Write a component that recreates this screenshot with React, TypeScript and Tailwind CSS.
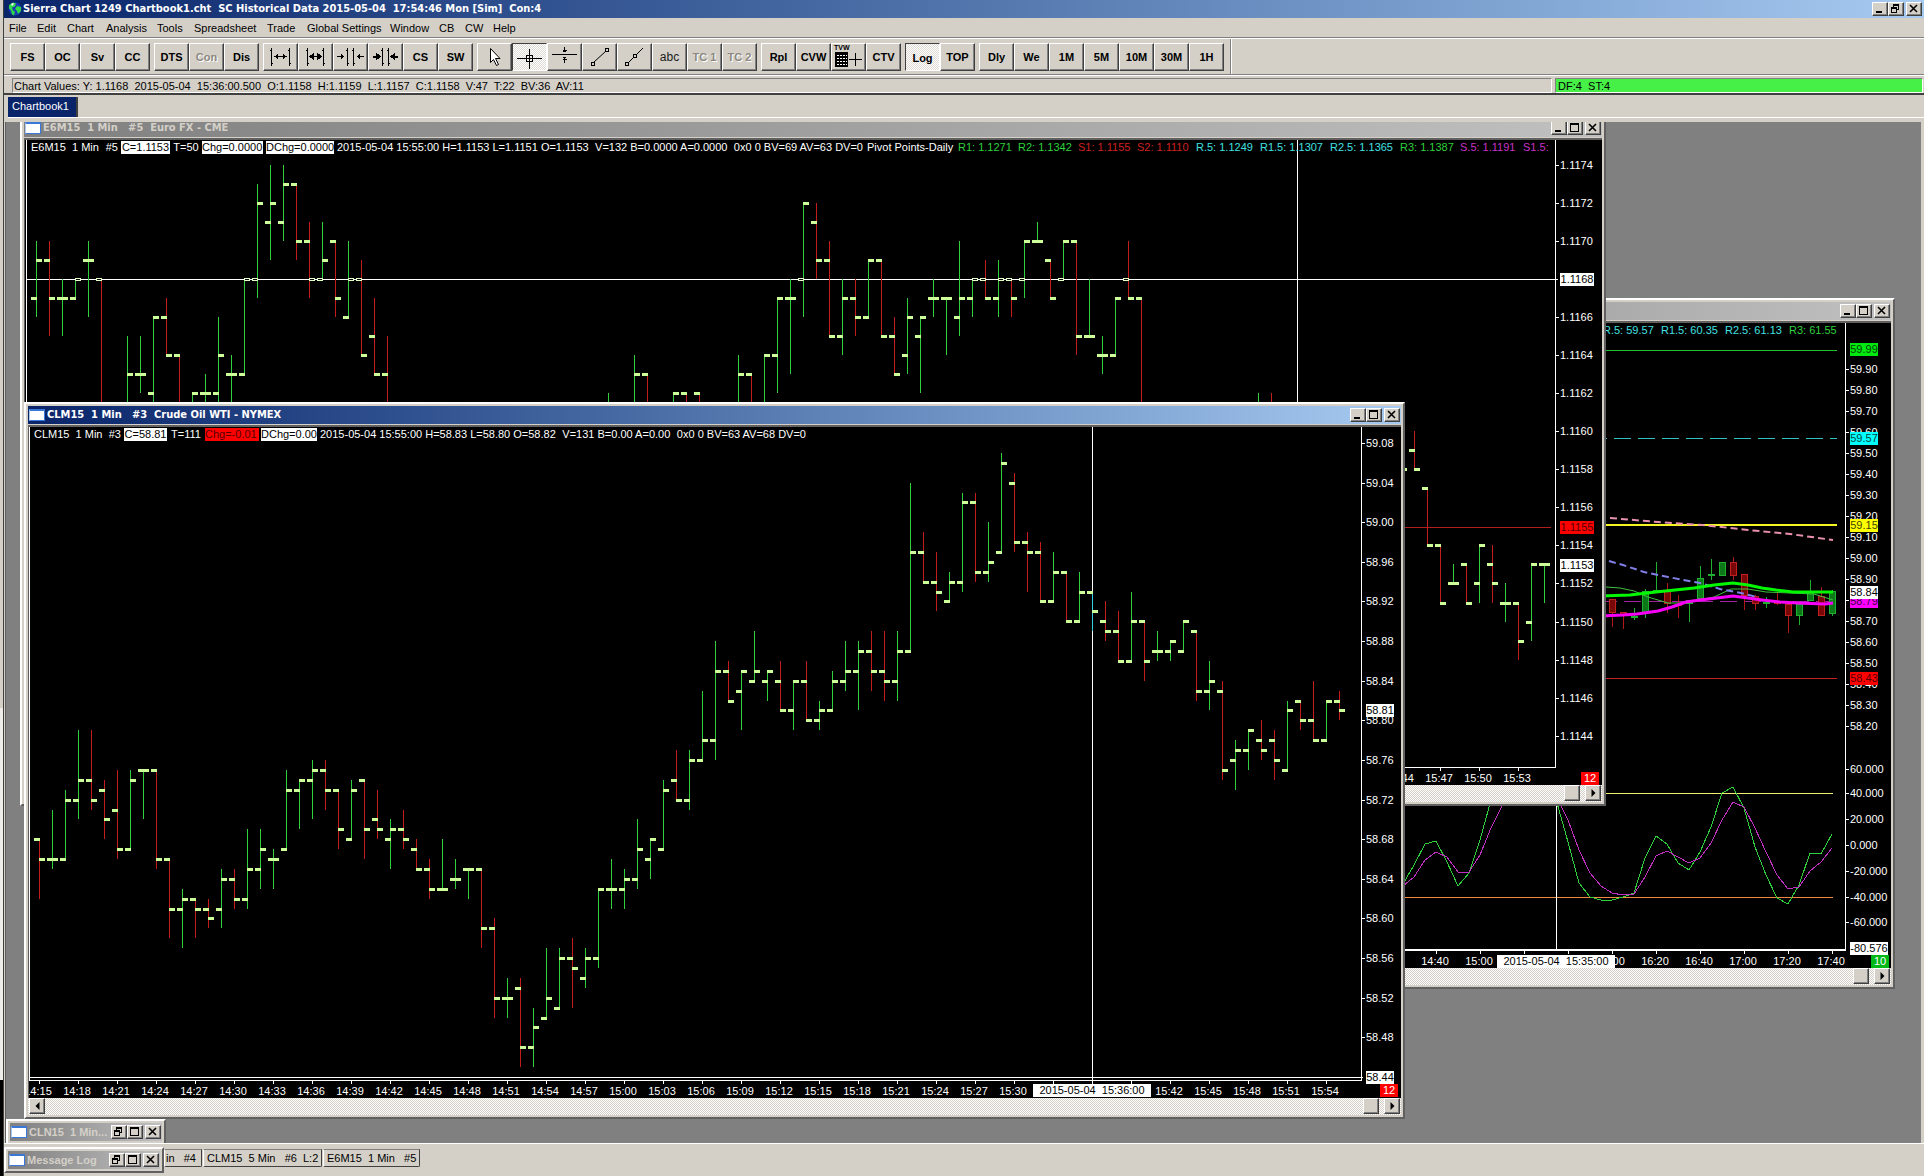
import type { ReactNode } from "react";

type Tone = "g" | "r" | "c";
/** minute offset, open, high, low, close, tone */
type Bar = [number, number | null, number, number, number | null, Tone];

const GREEN = "#2fd03c";
const RED = "#c41c1c";
const toneColor: Record<Tone, string> = { g: GREEN, r: RED, c: "#30d0e0" };

const crudeBars: Bar[] = [
  [0, 68, 68, 62, 66, "r"], [1, 66, 71, 65, 66, "g"], [2, 66, 73, 66, 72, "g"], [3, 72, 79, 70, 74, "g"],
  [4, 74, 79, 71, 72, "r"], [5, 73, 74, 68, 70, "r"], [6, 71, 75, 66, 67, "r"], [7, 67, 75, 67, 74, "g"],
  [8, 75, 75, 70, 75, "g"], [9, 75, 75, 65, 66, "r"], [10, 66, 66, 58, 61, "r"], [11, 61, 63, 57, 62, "g"],
  [12, 62, 62, 58, 61, "r"], [13, 61, 62, 59, 60, "r"], [14, 61, 65, 59, 64, "g"], [15, 64, 65, 61, 62, "r"],
  [16, 62, 69, 61, 65, "g"], [17, 65, 69, 63, 67, "g"], [18, 66, 67, 63, 66, "g"], [19, 67, 75, 67, 73, "g"],
  [20, 73, 74, 69, 74, "g"], [21, 74, 76, 70, 75, "g"], [22, 75, 76, 71, 73, "r"], [23, 73, 73, 67, 69, "r"],
  [24, 68, 74, 68, 73, "g"], [25, 74, 74, 66, 69, "r"], [26, 70, 73, 68, 69, "r"], [27, 68, 70, 65, 69, "g"],
  [28, 69, 71, 67, 68, "r"], [29, 67, 68, 65, 65, "r"], [30, 65, 66, 62, 63, "r"], [31, 63, 68, 63, 63, "g"],
  [32, 64, 66, 63, 64, "g"], [33, 65, 65, 62, 65, "g"], [34, 65, 65, 57, 59, "r"], [35, 59, 60, 50, 52, "r"],
  [36, 52, 54, 50, 52, "g"], [37, 53, 54, 45, 47, "r"], [38, 47, 51, 45, 49, "g"], [39, 50, 57, 50, 52, "g"],
  [40, 51, 57, 51, 56, "g"], [41, 56, 58, 51, 55, "r"], [42, 54, 57, 53, 56, "g"], [43, 56, 63, 55, 63, "g"],
  [44, 63, 66, 61, 63, "g"], [45, 63, 65, 61, 64, "g"], [46, 64, 70, 63, 67, "g"], [47, 66, 68, 64, 68, "g"],
  [48, 67, 74, 67, 73, "g"], [49, 74, 77, 72, 72, "r"], [50, 72, 77, 71, 76, "g"], [51, 76, 83, 76, 78, "g"],
  [52, 78, 88, 76, 85, "g"], [53, 85, 86, 82, 82, "r"], [54, 83, 85, 79, 85, "g"], [55, 84, 89, 84, 85, "g"],
  [56, 84, 85, 82, 85, "g"], [57, 84, 86, 81, 81, "r"], [58, 81, 84, 79, 84, "g"], [59, 84, 86, 80, 80, "r"],
  [60, 80, 82, 79, 81, "g"], [61, 81, 85, 81, 84, "g"], [62, 84, 88, 83, 85, "g"], [63, 85, 88, 81, 87, "g"],
  [64, 87, 89, 83, 85, "r"], [65, 85, 89, 82, 84, "r"], [66, 84, 89, 82, 87, "g"], [67, 87, 104, 87, 97, "g"],
  [68, 97, 99, 94, 94, "r"], [69, 94, 97, 91, 93, "r"], [70, 92, 95, 92, 94, "g"], [71, 94, 103, 93, 102, "g"],
  [72, 102, 103, 94, 95, "r"], [73, 95, 100, 94, 96, "g"], [74, 97, 107, 97, 106, "g"], [75, 104, 105, 97, 98, "r"],
  [76, 98, 99, 93, 97, "r"], [77, 97, 98, 92, 92, "r"], [78, 92, 97, 92, 95, "g"], [79, 95, 95, 90, 90, "r"],
  [80, 90, 95, 90, 93, "g"], [81, 93, 93, 89, 91, "c"], [82, 90, 92, 88, 89, "r"], [83, 89, 91, 86, 86, "r"],
  [84, 86, 93, 86, 90, "g"], [85, 90, 90, 84, 86, "r"], [86, 87, 89, 86, 87, "g"], [87, 87, 88, 86, 88, "g"],
  [88, 87, 90, 87, 90, "g"], [89, 89, 89, 82, 83, "r"], [90, 83, 86, 81, 84, "g"], [91, 83, 84, 74, 75, "r"],
  [92, 76, 78, 73, 77, "g"], [93, 77, 79, 75, 79, "g"], [94, 78, 80, 76, 77, "r"], [95, 78, 79, 74, 76, "r"],
  [96, 75, 82, 75, 81, "g"], [97, 82, 82, 79, 80, "r"], [98, 80, 84, 78, 78, "r"], [99, 78, 82, 78, 82, "g"],
  [100, 82, 83, 80, 81, "r"],
];

const euroBars: Bar[] = [
  [0, 67, 70, 66, 69, "g"], [1, 69, 70, 65, 67, "r"], [2, 67, 68, 65, 67, "g"], [3, 67, 68, 67, 68, "g"],
  [4, 69, 70, 66, 69, "g"], [5, 68, 68, 58, null, "r"], [7, null, 65, 58, 63, "g"], [8, 63, 65, 62, 63, "g"],
  [9, 62, 66, 58, 66, "g"], [10, 66, 67, 64, 64, "r"], [11, 64, 64, 58, null, "r"], [12, null, 62, 58, 62, "g"],
  [13, 62, 63, 58, 62, "g"], [14, 62, 66, 58, 64, "g"], [15, 63, 64, 58, 63, "g"], [16, 63, 68, 63, 68, "g"],
  [17, 68, 73, 67, 72, "g"], [18, 71, 74, 69, 72, "g"], [19, 71, 74, 70, 73, "g"], [20, 73, 73, 69, 70, "r"],
  [21, 70, 71, 67, 68, "r"], [22, 68, 71, 68, 69, "g"], [23, 70, 70, 66, 67, "r"], [24, 66, 70, 66, 68, "g"],
  [25, 68, 69, 64, 64, "r"], [26, 65, 67, 63, 63, "r"], [27, 63, 65, 58, null, "r"], [44, null, 62, 58, null, "g"],
  [46, null, 64, 58, 63, "g"], [47, 63, 63, 58, null, "r"], [49, null, 62, 58, 62, "g"], [50, 62, 62, 58, null, "r"],
  [51, 62, 62, 58, null, "r"], [54, null, 64, 58, 63, "g"], [55, 63, 63, 58, null, "r"], [56, null, 64, 58, 64, "g"],
  [57, 64, 67, 62, 67, "g"], [58, 67, 68, 63, 67, "g"], [59, 68, 72, 66, 72, "g"], [60, 71, 72, 68, 69, "r"],
  [61, 69, 70, 65, 65, "r"], [62, 65, 68, 64, 67, "g"], [63, 67, 68, 65, 66, "r"], [64, 66, 69, 66, 69, "g"],
  [65, 69, 69, 65, 65, "r"], [66, 65, 66, 63, 63, "r"], [67, 64, 67, 63, 66, "g"], [68, 65, 66, 62, 66, "g"],
  [69, 67, 68, 66, 67, "g"], [70, 67, 67, 64, 67, "g"], [71, 66, 70, 65, 67, "g"], [72, 67, 68, 66, 68, "g"],
  [73, 68, 69, 67, 67, "r"], [74, 67, 69, 66, 68, "g"], [75, 68, 68, 66, 67, "r"], [76, 68, 70, 67, 70, "g"],
  [77, 70, 71, 70, 70, "g"], [78, 69, 69, 67, 67, "r"], [79, 68, 70, 68, 70, "g"], [80, 70, 70, 64, 65, "r"],
  [81, 65, 68, 65, 65, "g"], [82, 64, 65, 63, 64, "g"], [83, 64, 67, 64, 67, "g"], [84, 68, 70, 67, 67, "r"],
  [85, 67, 67, 58, null, "r"], [94, null, 62, 58, null, "g"], [95, null, 62, 58, null, "r"], [105, null, 59, 58, 58, "r"],
  [106, 59, 60, 58, 58, "r"], [107, 57, 57, 54, 54, "r"], [108, 54, 54, 51, 51, "r"], [109, 52, 53, 52, 52, "g"],
  [110, 53, 53, 51, 51, "r"], [111, 52, 54, 51, 54, "g"], [112, 53, 54, 51, 52, "r"], [113, 51, 52, 50, 51, "g"],
  [114, 51, 51, 48, 49, "r"], [115, 50, 53, 49, 53, "g"], [116, 53, 53, 51, 53, "g"],
];

/** wick top, wick bottom, body top, body bottom, tone */
const candles: [number, number, number, number, Tone][] = [
  [599, 627, 599, 613, "r"], [612, 629, 612, 615, "r"], [608, 620, 616, 617, "g"], [589, 618, 591, 613, "g"],
  [562, 592, 590, 592, "g"], [583, 613, 591, 604, "r"], [595, 618, 604, 606, "r"], [600, 622, 600, 604, "g"],
  [566, 600, 578, 599, "g"], [559, 580, 574, 576, "g"], [562, 576, 562, 576, "g"], [557, 580, 562, 576, "r"],
  [574, 610, 574, 596, "r"], [595, 610, 596, 604, "r"], [597, 608, 602, 604, "g"], [592, 605, 601, 604, "r"],
  [604, 633, 604, 616, "r"], [604, 625, 604, 616, "g"], [580, 601, 592, 601, "g"], [587, 616, 596, 616, "r"],
  [590, 616, 591, 614, "g"],
];

const oscFast = [
  884, 865, 844, 841, 862, 886, 873, 840, 800, 775, 760, 755, 760, 775, 803, 842, 883, 897, 900, 900, 897, 893, 858,
  836, 844, 863, 870, 852, 827, 793, 787, 808, 847, 875, 898, 904, 885, 853, 854, 834,
];
const oscSlow = [
  886, 877, 860, 852, 857, 872, 872, 855, 828, 806, 785, 775, 775, 780, 798, 820, 850, 873, 886, 893, 895, 894, 877,
  856, 851, 857, 863, 858, 843, 820, 802, 807, 828, 852, 875, 889, 887, 871, 862, 848,
];
const series = (ys: number[]) => ys.map((y, i) => `${1403 + i * 11},${y}`).join(" ");

function clock(start: number, offset: number) {
  const t = start + offset;
  return `${Math.floor(t / 60)}:${String(t % 60).padStart(2, "0")}`;
}

function Bars({ bars, x0, y, mark }: { bars: Bar[]; x0: number; y: (v: number) => number; mark?: number }) {
  return (
    <g>
      {bars.map(([i, o, h, l, c, tone]) => {
        const x = x0 + i * 13;
        const tick = (v: number, tx: number) =>
          v === mark ? (
            <g>
              <rect x={tx} y={Math.round(y(v)) - 1} width={6} height={3} fill="#e0ffc0" />
              <rect x={tx + 1} y={Math.round(y(v))} width={4} height={1} fill="#000" />
            </g>
          ) : (
            <rect x={tx} y={Math.round(y(v)) - 1} width={6} height={3} fill="#ccff99" />
          );
        return (
          <g key={i}>
            <rect x={x} y={Math.round(y(h))} width={1} height={Math.max(1, Math.round(y(l)) - Math.round(y(h)))} fill={toneColor[tone]} />
            {o !== null && tick(o, x - 5)}
            {c !== null && tick(c, x)}
          </g>
        );
      })}
    </g>
  );
}

function AxisLabel({ x, y, children }: { x: number; y: number; children: ReactNode }) {
  return (
    <g>
      <rect x={x - 4} y={Math.round(y)} width={3} height={1} fill="#fff" />
      <text x={x} y={Math.round(y) + 4} fill="#fff">{children}</text>
    </g>
  );
}

function Tag({ x, y, w, fill, color, children }: { x: number; y: number; w: number; fill: string; color: string; children: ReactNode }) {
  return (
    <g>
      <rect x={x} y={y - 6} width={w} height={13} fill={fill} />
      <text x={x + w / 2} y={y + 4} fill={color} textAnchor="middle">{children}</text>
    </g>
  );
}

function Plot({ x, y, w, h, label, children }: { x: number; y: number; w: number; h: number; label: string; children: ReactNode }) {
  return (
    <svg
      role="img"
      aria-label={label}
      className="block max-w-none text-[11px]"
      width={w}
      height={h}
      viewBox={`${x} ${y} ${w} ${h}`}
      shapeRendering="crispEdges"
    >
      {children}
    </svg>
  );
}

const raised = "border border-t-white border-l-white border-r-[#404040] border-b-[#404040] bg-[#d4d0c8]";

type Glyph = "min" | "max" | "restore" | "close";
function CaptionButton({ glyph }: { glyph: Glyph }) {
  const names = { min: "Minimize", max: "Maximize", restore: "Restore", close: "Close" };
  return (
    <button
      type="button"
      aria-label={names[glyph]}
      className={`flex h-[14px] w-4 items-center justify-center shadow-[inset_-1px_-1px_#808080] ${raised}`}
    >
      <svg width="10" height="10" viewBox="0 0 10 10" shapeRendering="crispEdges" fill="none" stroke="#000">
        {glyph === "min" && <path d="M1 8h6" strokeWidth="2" />}
        {glyph === "max" && <path d="M0.5 1.5h8v7h-8zM0 0.5h9" />}
        {glyph === "restore" && <path d="M2.5 3V1.5h5v4H6M2 0.5h6M0.5 4.5h5v4h-5zM0 3.5h6" />}
        {glyph === "close" && <path d="M1 1l7 7M8 1l-7 7" strokeWidth="1.6" shapeRendering="auto" />}
      </svg>
    </button>
  );
}

function DocIcon() {
  return <span className="h-3 w-4 shrink-0 border border-t-2 border-[#3a78d8] border-l-[#a8c8f0] bg-white" />;
}

function Caption({ title, active, compact, glyphs }: { title: string; active?: boolean; compact?: boolean; glyphs: Glyph[] }) {
  return (
    <div
      className={`flex h-[18px] items-center px-[1px] ${
        active ? "bg-linear-to-r from-[#0a246a] to-[#a6caf0]" : "bg-linear-to-r from-[#808080] to-[#c0c0c0]"
      }`}
    >
      <DocIcon />
      <h2
        className={`ml-[2px] min-w-0 flex-1 truncate whitespace-pre text-[11px] font-bold ${
          compact
            ? "font-['Liberation_Sans',Arial,sans-serif]"
            : "font-['DejaVu_Sans_Condensed','Liberation_Sans',sans-serif]"
        } ${active ? "text-white" : "text-[#d4d0c8]"}`}
      >
        {title}
      </h2>
      <CaptionButton glyph={glyphs[0]} />
      <CaptionButton glyph={glyphs[1]} />
      <span className="w-[2px]" />
      <CaptionButton glyph={glyphs[2]} />
    </div>
  );
}

const frame =
  "absolute border-2 border-t-white border-l-white border-r-[#606060] border-b-[#606060] bg-[#d4d0c8] p-[2px]";

function ScrollBar() {
  const btn = `flex h-4 w-4 items-center justify-center shadow-[inset_-1px_-1px_#808080] ${raised}`;
  return (
    <div className="flex h-[17px] items-start bg-[repeating-conic-gradient(#fff_0_25%,#d4d0c8_0_50%)] bg-[length:2px_2px] px-[1px]">
      <button type="button" aria-label="Scroll left" className={btn}>
        <svg width="5" height="8" viewBox="0 0 5 8"><path d="M4.5 0v8L0.5 4z" /></svg>
      </button>
      <span className="flex-1" />
      <button type="button" aria-label="Scroll position" className={btn} />
      <span className="w-[5px]" />
      <button type="button" aria-label="Scroll right" className={btn}>
        <svg width="5" height="8" viewBox="0 0 5 8"><path d="M0.5 0v8l4-4z" /></svg>
      </button>
    </div>
  );
}

function ChartWindow({ place, title, active, header, children }: { place: string; title: string; active?: boolean; header: ReactNode; children: ReactNode }) {
  return (
    <section className={`${frame} ${place}`}>
      <Caption title={title} active={active} glyphs={["min", "max", "close"]} />
      <div className="relative mt-[1px] overflow-hidden border-t-2 border-l border-[#606060] bg-black">
        {children}
        <div className="absolute top-[1px] left-0 flex h-[13px] items-center overflow-hidden whitespace-pre text-[11px] leading-[13px] text-white">
          {header}
        </div>
      </div>
      <ScrollBar />
    </section>
  );
}

function SymbolName({ name, chart }: { name: string; chart: string }) {
  return (
    <span className="flex w-[90px] shrink-0 justify-between pr-[3px]">
      <span>{name}</span>
      <span>{chart}</span>
    </span>
  );
}

function EuroChart() {
  const y = (v: number) => 279 + (68 - v) * 19.03;
  return (
    <ChartWindow
      place="-top-[7px] left-[14px] w-[1586px]"
      title="E6M15  1 Min   #5  Euro FX - CME"
      header={
        <div className="ml-[6px] flex w-[1524px] overflow-hidden">
          <SymbolName name="E6M15  1 Min" chart="#5" />
          <span className="w-[49px] shrink-0 bg-white text-center text-black">C=1.1153</span>
          <span className="w-8 shrink-0 text-center">T=50</span>
          <span className="w-[61px] shrink-0 bg-white text-black">Chg=0.0000</span>
          <span className="ml-[3px] w-[68px] shrink-0 bg-white text-black">DChg=0.0000</span>
          <span className="ml-[3px] flex w-[530px] shrink-0 justify-between pr-1">
            <span>2015-05-04 15:55:00 H=1.1153 L=1.1151 O=1.1153</span>
            <span>V=132 B=0.0000 A=0.0000</span>
            <span>0x0 0 BV=69 AV=63 DV=0</span>
          </span>
          <span className="w-[91px] shrink-0">Pivot Points-Daily</span>
          <span className="w-[60px] shrink-0 text-[#2fd03c]">R1: 1.1271</span>
          <span className="w-[60px] shrink-0 text-[#2fd03c]">R2: 1.1342</span>
          <span className="w-[59px] shrink-0 text-[#d02020]">S1: 1.1155</span>
          <span className="w-[59px] shrink-0 text-[#d02020]">S2: 1.1110</span>
          <span className="w-16 shrink-0 text-[#40e0e0]">R.5: 1.1249</span>
          <span className="w-[70px] shrink-0 text-[#40e0e0]">R1.5: 1.1307</span>
          <span className="w-[70px] shrink-0 text-[#40e0e0]">R2.5: 1.1365</span>
          <span className="w-[60px] shrink-0 text-[#2fd03c]">R3: 1.1387</span>
          <span className="w-[63px] shrink-0 text-[#c832c8]">S.5: 1.1191</span>
          <span className="shrink-0 text-[#c832c8]">S1.5:</span>
        </div>
      }
    >
      <Plot x={25} y={140} w={1577} h={645} label="Euro FX one minute price chart">
        <rect x={26} y={140} width={1} height={627} fill="#fff" />
        <rect x={1297} y={140} width={1} height={627} fill="#fff" />
        <rect x={26} y={279} width={1532} height={1} fill="#fff" />
        <rect x={26} y={527} width={1525} height={1} fill="#b02020" />
        <Bars bars={euroBars} x0={36} y={y} mark={68} />
        <rect x={1555} y={140} width={1} height={627} fill="#fff" />
        <rect x={26} y={767} width={1530} height={1} fill="#fff" />
        {Array.from({ length: 16 }, (_, k) => 74 - k * 2).filter((v) => v !== 68).map((v) => (
          <AxisLabel key={v} x={1560} y={y(v)}>{`1.11${v}`}</AxisLabel>
        ))}
        <Tag x={1560} y={279} w={34} fill="#fff" color="#000">1.1168</Tag>
        <Tag x={1560} y={527} w={34} fill="#f00" color="#500">1.1155</Tag>
        <Tag x={1560} y={565} w={34} fill="#fff" color="#000">1.1153</Tag>
        {[105, 108, 111, 114].map((i) => (
          <g key={i}>
            <rect x={36 + i * 13} y={768} width={1} height={3} fill="#fff" />
            <text x={35 + i * 13} y={782} fill="#fff" textAnchor="middle">{clock(839, i)}</text>
          </g>
        ))}
        <Tag x={1581} y={778} w={18} fill="#f00" color="#fff">12</Tag>
      </Plot>
    </ChartWindow>
  );
}

function CrudeChart() {
  const y = (v: number) => 443 + (108 - v) * 9.906;
  return (
    <ChartWindow
      place="top-[280px] left-[18px] w-[1381px]"
      title="CLM15  1 Min   #3  Crude Oil WTI - NYMEX"
      active
      header={
        <div className="ml-[5px] flex">
          <SymbolName name="CLM15  1 Min" chart="#3" />
          <span className="w-[43px] shrink-0 bg-white text-center text-black">C=58.81</span>
          <span className="w-[38px] shrink-0 text-center">T=111</span>
          <span className="w-[54px] shrink-0 bg-[#f00] text-[#500]">Chg=-0.01</span>
          <span className="ml-[2px] w-[56px] shrink-0 bg-white text-black">DChg=0.00</span>
          <span className="ml-[3px] flex w-[486px] justify-between">
            <span>2015-05-04 15:55:00 H=58.83 L=58.80 O=58.82</span>
            <span>V=131 B=0.00 A=0.00</span>
            <span>0x0 0 BV=63 AV=68 DV=0</span>
          </span>
        </div>
      }
    >
      <Plot x={29} y={427} w={1372} h={671} label="Crude Oil one minute price chart">
        <rect x={29} y={427} width={1} height={653} fill="#fff" />
        <rect x={1092} y={427} width={1} height={653} fill="#fff" />
        <rect x={29} y={1077} width={1334} height={1} fill="#fff" />
        <Bars bars={crudeBars} x0={39} y={y} />
        <rect x={1361} y={427} width={1} height={654} fill="#fff" />
        <rect x={29} y={1080} width={1333} height={1} fill="#fff" />
        {Array.from({ length: 16 }, (_, k) => 108 - k * 4).map((v) => (
          <AxisLabel key={v} x={1366} y={y(v)}>{(58 + v / 100).toFixed(2)}</AxisLabel>
        ))}
        <Tag x={1366} y={710} w={28} fill="#fff" color="#000">58.81</Tag>
        <Tag x={1366} y={1077} w={28} fill="#fff" color="#000">58.44</Tag>
        {Array.from({ length: 34 }, (_, k) => k * 3).map((i) => (
          <g key={i}>
            <rect x={39 + i * 13} y={1081} width={1} height={3} fill="#fff" />
            {(i < 78 || i > 84) && (
              <text x={38 + i * 13} y={1095} fill="#fff" textAnchor="middle">{clock(855, i)}</text>
            )}
          </g>
        ))}
        <Tag x={1033} y={1090} w={118} fill="#fff" color="#000">{"2015-05-04\u00a0\u00a015:36:00"}</Tag>
        <Tag x={1380} y={1090} w={18} fill="#f00" color="#fff">12</Tag>
      </Plot>
    </ChartWindow>
  );
}

function OscillatorChart() {
  const osc: [number, string][] = [
    [769, "60.000"], [793, "40.000"], [819, "20.000"], [845, "0.000"], [871, "-20.000"], [897, "-40.000"], [922, "-60.000"],
  ];
  return (
    <ChartWindow
      place="top-[176px] left-[994px] w-[895px]"
      title="CLM15  5 Min   #6  Crude Oil WTI - NYMEX"
      header={
        <div className="ml-[598px] flex">
          <span className="w-[58px] shrink-0 text-[#40e0e0]">R.5: 59.57</span>
          <span className="w-16 shrink-0 text-[#40e0e0]">R1.5: 60.35</span>
          <span className="w-16 shrink-0 text-[#40e0e0]">R2.5: 61.13</span>
          <span className="shrink-0 text-[#2fd03c]">R3: 61.55</span>
        </div>
      }
    >
      <Plot x={1005} y={323} w={886} h={645} label="Crude Oil five minute price chart with oscillator">
        <rect x={1600} y={350} width={237} height={1} fill="#20c030" />
        <path d="M1590 438.5H1837" stroke="#30c0c0" strokeDasharray="17 7" />
        <rect x={1600} y={524} width={237} height={2} fill="#f4f420" />
        <rect x={1600} y={678} width={237} height={1} fill="#c82020" />
        <path d="M1600 601.5H1837" stroke="#a020a0" strokeDasharray="17 7" />
        {candles.map(([wt, wb, bt, bb, tone], i) => {
          const x = 1612 + i * 11;
          return (
            <g key={i}>
              <rect x={x} y={wt} width={1} height={wb - wt} fill={tone === "g" ? "#20b030" : "#b01818"} />
              <rect
                x={x - 2.5}
                y={bt + 0.5}
                width={6}
                height={Math.max(1, bb - bt - 1)}
                fill={tone === "g" ? "#0c7818" : "#780808"}
                stroke={tone === "g" ? "#20b030" : "#c02020"}
              />
            </g>
          );
        })}
        <g fill="none" shapeRendering="auto">
          <path d="M1606 587L1620 588L1634 591L1648 597L1668 603L1682 603L1714 597L1731 589L1748 589L1766 592L1814 594L1833 600" stroke="#40c040" />
          <path d="M1609 561L1623 565L1644 572L1668 577L1700 583L1720 589L1741 593L1757 597" stroke="#8080e8" strokeWidth="2" strokeDasharray="7 4" />
          <path d="M1610 518L1658 522L1703 525L1748 530L1790 534L1833 540" stroke="#e890b0" strokeWidth="2" strokeDasharray="7 4" />
          <path d="M1600 596L1630 595L1656 592L1675 590L1694 588L1714 585L1733 583L1748 585L1762 588L1776 590L1793 592L1833 592" stroke="#00f800" strokeWidth="3" />
          <path d="M1600 616L1623 615L1637 614L1658 611L1672 607L1686 602L1700 600L1717 598L1733 596L1748 598L1762 600L1780 602L1797 603L1825 604L1833 603" stroke="#f800f8" strokeWidth="3" />
        </g>
        <rect x={1005} y={793} width={828} height={1} fill="#f0f070" />
        <rect x={1005} y={897} width={828} height={1} fill="#f08840" />
        <polyline points={series(oscFast)} fill="none" stroke={GREEN} />
        <polyline points={series(oscSlow)} fill="none" stroke="#c030c0" />
        <rect x={1556} y={323} width={1} height={627} fill="#fff" />
        <rect x={1845} y={323} width={1} height={628} fill="#fff" />
        <rect x={1005} y={949} width={841} height={2} fill="#fff" />
        {Array.from({ length: 18 }, (_, k) => (
          <AxisLabel key={k} x={1850} y={369 + k * 21}>{(59.9 - k / 10).toFixed(2)}</AxisLabel>
        ))}
        {osc.map(([y, text]) => (
          <AxisLabel key={text} x={1850} y={y}>{text}</AxisLabel>
        ))}
        <Tag x={1850} y={349} w={28} fill="#00e810" color="#040">59.99</Tag>
        <Tag x={1850} y={438} w={28} fill="#0ff" color="#044">59.57</Tag>
        <Tag x={1850} y={525} w={28} fill="#ff0" color="#440">59.15</Tag>
        <Tag x={1850} y={601} w={28} fill="#f0f" color="#404">58.79</Tag>
        <Tag x={1850} y={592} w={28} fill="#fff" color="#000">58.84</Tag>
        <Tag x={1850} y={678} w={28} fill="#f00" color="#500">58.43</Tag>
        <Tag x={1850} y={948} w={38} fill="#fff" color="#000">-80.576</Tag>
        {Array.from({ length: 10 }, (_, k) => k).map((k) => (
          <g key={k}>
            <rect x={1436 + k * 44} y={951} width={1} height={3} fill="#fff" />
            {k !== 2 && k !== 3 && (
              <text x={1435 + k * 44} y={965} fill="#fff" textAnchor="middle">{clock(880, k * 20)}</text>
            )}
          </g>
        ))}
        <Tag x={1497} y={961} w={118} fill="#fff" color="#000">{"2015-05-04\u00a0\u00a015:35:00"}</Tag>
        <Tag x={1871} y={961} w={18} fill="#00b818" color="#fff">10</Tag>
      </Plot>
    </ChartWindow>
  );
}

/* ---------- toolbar ---------- */

const icon = (children: ReactNode) => (
  <svg width="31" height="24" viewBox="0 0 31 24" fill="none" stroke="#000" shapeRendering="crispEdges">
    {children}
  </svg>
);
const posts = (a: number, b: number) => (
  <path d={`M${a}.5 3v18M${b}.5 3v18M${a - 1} 5.5h2M${a} 18.5h2M${b - 1} 5.5h2M${b} 18.5h2`} />
);

const tools = {
  widen: icon(<>{posts(6, 24)}<path d="M9 11.5h13M12.5 9v5M11.5 10v3M18.5 9v5M19.5 10v3" /></>),
  widenBold: icon(<>{posts(7, 23)}<path d="M10 11.5h11" /><path d="M9 11.5l5-4v8zM22 11.5l-5-4v8z" fill="#000" stroke="none" /></>),
  narrow: icon(<>{posts(12, 18)}<path d="M2 11.5h7M22 11.5h7M7.5 10v3M6.5 9v5M23.5 10v3M24.5 9v5" /></>),
  narrowBold: icon(<>{posts(12, 18)}<path d="M3 11.5h4M24 11.5h4" strokeWidth="2" /><path d="M11 11.5l-5-4v8zM20 11.5l5-4v8z" fill="#000" stroke="none" /></>),
  pointer: icon(<path d="M11.5 3.5v14l3-3 3 6 2-1-3-6h4.5z" fill="#fff" shapeRendering="auto" />),
  cross: icon(<path d="M3 12.5h25M15.5 3v20M12.5 9.5h6v6h-6z" />),
  level: icon(<path d="M3 9.5h25M15.5 2v5M13.5 5h4M15.5 12v6M13.5 14h4M14 6.5h3M14 12.5h3" />),
  line: icon(<><path d="M10 17L22 6" shapeRendering="auto" /><path d="M7.500 17.500h3v3h-3zM21.500 3.500h3v3h-3z" /></>),
  ray: icon(<><path d="M9 18L24 3" shapeRendering="auto" /><path d="M6.500 17.500h3v3h-3zM14.500 9.500h3v3h-3z" fill="#d4d0c8" /></>),
  table: (
    <span className="flex h-full w-full flex-col pl-[2px]">
      <span className="text-left text-[7px] leading-[7px]">TVW</span>
      <svg width="29" height="17" viewBox="0 0 29 17" shapeRendering="crispEdges">
        <rect x="1" y="1" width="13" height="15" fill="#000" />
        <path d="M3 4.500h10M3 7.500h10M3 10.500h10M3 13.500h10" stroke="#fff" strokeDasharray="2 1" />
        <path d="M15 8.500h13M21.500 2v13" stroke="#000" />
      </svg>
    </span>
  ),
};

type Tool = { name: string; art?: ReactNode; look?: "off" | "on" | "plain" };
const toolGroups: Tool[][] = [
  [{ name: "FS" }, { name: "OC" }, { name: "Sv" }, { name: "CC" }],
  [{ name: "DTS" }, { name: "Con", look: "off" }, { name: "Dis" }],
  [
    { name: "Increase bar spacing", art: tools.widen },
    { name: "Increase bar spacing fast", art: tools.widenBold },
    { name: "Decrease bar spacing", art: tools.narrow },
    { name: "Decrease bar spacing fast", art: tools.narrowBold },
    { name: "CS" },
    { name: "SW" },
  ],
  [
    { name: "Pointer", art: tools.pointer },
    { name: "Cross hair", art: tools.cross, look: "on" },
    { name: "Horizontal line", art: tools.level },
    { name: "Line", art: tools.line },
    { name: "Ray", art: tools.ray },
    { name: "abc", look: "plain" },
    { name: "TC 1", look: "off" },
    { name: "TC 2", look: "off" },
  ],
  [{ name: "Rpl" }, { name: "CVW" }, { name: "TVW", art: tools.table }, { name: "CTV" }],
  [{ name: "Log", look: "on" }, { name: "TOP" }],
  [{ name: "Dly" }, { name: "We" }, { name: "1M" }, { name: "5M" }, { name: "10M" }, { name: "30M" }, { name: "1H" }],
];

function ToolButton({ name, art, look }: Tool) {
  const skin =
    look === "on"
      ? "border border-t-[#404040] border-l-[#404040] border-r-white border-b-white bg-[repeating-conic-gradient(#fff_0_25%,#dedbd4_0_50%)] bg-[length:2px_2px] pt-[2px]"
      : `${raised} shadow-[inset_-1px_-1px_#808080]`;
  const type =
    look === "off"
      ? "text-[11px] font-bold text-[#8c8880] [text-shadow:1px_1px_#fff]"
      : look === "plain"
        ? "text-[#202020] text-xs"
        : "text-[11px] font-bold text-black";
  return (
    <button
      type="button"
      aria-label={name}
      aria-pressed={look === "on"}
      disabled={look === "off"}
      className={`flex h-7 w-[35px] items-center justify-center leading-none ${skin} ${type}`}
    >
      {art ?? name}
    </button>
  );
}

const menus: [string, string][] = [
  ["File", "w-7"], ["Edit", "w-[30px]"], ["Chart", "w-[39px]"], ["Analysis", "w-[51px]"], ["Tools", "w-[37px]"],
  ["Spreadsheet", "w-[73px]"], ["Trade", "w-10"], ["Global Settings", "w-[83px]"], ["Window", "w-[49px]"],
  ["CB", "w-[26px]"], ["CW", "w-7"], ["Help", "w-8"],
];

function MiniWindow({ title, place }: { title: string; place: string }) {
  return (
    <section className={`${frame} ${place} w-[160px]`}>
      <Caption title={title} compact glyphs={["restore", "max", "close"]} />
    </section>
  );
}

export default function App() {
  return (
    <div className="flex h-screen w-full overflow-hidden bg-[#d4d0c8] font-['Liberation_Sans',Arial,sans-serif] text-[11px] text-black">
      <aside className="flex w-1 shrink-0 flex-col border-r border-[#404040]">
        <span className="h-[708px] bg-[#d4d0c8]" />
        <span className="h-[372px] bg-[#eeece8]" />
        <span className="flex-1 bg-black" />
      </aside>
      <div className="flex min-w-0 flex-1 flex-col">
        <header className="flex h-[18px] shrink-0 items-center bg-linear-to-r from-[#0a246a] to-[#a6caf0] pr-[2px] pl-1">
          <svg width="14" height="14" viewBox="0 0 14 14" aria-hidden="true">
            <circle cx="7" cy="7" r="6.500" fill="#1838b8" />
            <path d="M1 3l4-2.500 3 1-1 3-3 1 1 3 2 1-1 4-2-1-1-4-2-2zM9 4l4 1v4l-3 3-1-3-2-2z" fill="#30d848" />
            <path d="M3 2l2-1 1 1-2 2z" fill="#fff" />
          </svg>
          <h1 className="ml-[1px] flex-1 whitespace-pre font-['DejaVu_Sans_Condensed','Liberation_Sans',sans-serif] text-[11px] font-bold text-white">
            {"Sierra Chart 1249 Chartbook1.cht  SC Historical Data 2015-05-04  17:54:46 Mon [Sim]  Con:4"}
          </h1>
          <CaptionButton glyph="min" />
          <CaptionButton glyph="restore" />
          <span className="w-[2px]" />
          <CaptionButton glyph="close" />
        </header>

        <nav className="flex h-5 shrink-0 items-center border-b border-[#808080] pt-[2px] pl-[5px]">
          {menus.map(([name, width]) => (
            <button key={name} type="button" className={`shrink-0 text-left whitespace-nowrap ${width}`}>
              {name}
            </button>
          ))}
        </nav>

        <div className="flex h-[37px] shrink-0 items-start border-t border-b border-t-white border-b-[#808080] pt-1 pl-[6px]">
          <div className="flex gap-1">
            {toolGroups.map((group, i) => (
              <div key={i} className="flex">
                {group.map((tool) => (
                  <ToolButton key={tool.name} {...tool} />
                ))}
              </div>
            ))}
          </div>
          <span className="-mt-1 ml-[6px] h-[35px] w-[2px] border-r border-l border-r-white border-l-[#808080]" />
        </div>

        <div className="flex h-5 shrink-0 gap-[3px] border-t border-b-2 border-t-white border-b-[#404040] pt-[2px] pl-2">
          <output className="flex flex-[1546_1_0%] items-center border border-[#808080] border-r-white border-b-white pt-[2px] pl-[1px]">
            <span className="whitespace-pre">
              {"Chart Values: Y: 1.1168  2015-05-04  15:36:00.500  O:1.1158  H:1.1159  L:1.1157  C:1.1158  V:47  T:22  BV:36  AV:11"}
            </span>
          </output>
          <output className="mr-[1px] flex flex-[366_1_0%] items-center border border-[#808080] border-r-white border-b-white bg-[#46f046] pt-[2px] pl-[2px] whitespace-pre">
            {"DF:4  ST:4"}
          </output>
        </div>

        <div className="h-[27px] shrink-0 pt-[2px] pl-1">
          <div className="flex border-b border-white">
            <button
              type="button"
              className="h-5 w-[70px] border-r-2 border-[#404040] bg-[#0a246a] pb-[2px] pl-1 text-left text-white"
            >
              Chartbook1
            </button>
          </div>
        </div>

        <main className="relative mr-[3px] ml-[1px] min-h-0 flex-1 overflow-hidden border-l border-[#606060] bg-[#808080]">
          <OscillatorChart />
          <EuroChart />
          <CrudeChart />
          <MiniWindow title="CLN15  1 Min..." place="-bottom-[2px] left-0" />
        </main>

        <footer className="relative h-[33px] shrink-0 border-t border-white pt-[5px] pl-[160px]">
          <div className="flex gap-[1px]">
            {[
              ["in   #4", "w-[38px] pl-[1px]"],
              ["CLM15  5 Min   #6  L:2", "w-[119px] pl-[3px]"],
              ["E6M15  1 Min   #5", "w-[97px] pl-[3px]"],
            ].map(([name, cls]) => (
              <button
                key={name}
                type="button"
                className={`h-[18px] overflow-hidden rounded-b-[2px] border border-t-[#808080] border-r-[#404040] border-b-[#404040] border-l-white text-left whitespace-pre ${cls}`}
              >
                {name}
              </button>
            ))}
          </div>
          <MiniWindow title="Message Log" place="top-[3px] left-0" />
        </footer>
      </div>
    </div>
  );
}
